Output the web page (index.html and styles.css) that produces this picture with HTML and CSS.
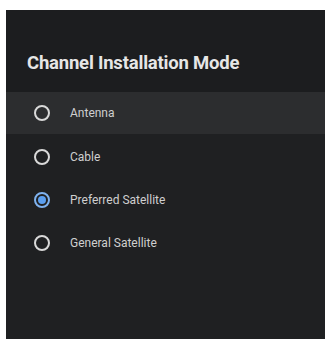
FILE: index.html
```html
<!DOCTYPE html>
<html>
<head>
<meta charset="utf-8">
<link rel="stylesheet" href="styles.css">
</head>
<body>
<div class="panel">
  <div class="header"><h1 class="title">Channel Installation Mode</h1></div>
  <ul class="list">
    <li class="item focused"><span class="radio"></span><span class="label">Antenna</span></li>
    <li class="item"><span class="radio"></span><span class="label">Cable</span></li>
    <li class="item"><span class="radio checked"></span><span class="label">Preferred Satellite</span></li>
    <li class="item"><span class="radio"></span><span class="label">General Satellite</span></li>
  </ul>
</div>
</body>
</html>
```
FILE: styles.css
```css
html, body { margin: 0; padding: 0; background: #ffffff; }
body { padding: 10px 4px 0 6px; height: 339px; box-sizing: border-box; overflow: hidden; font-family: Roboto, "Liberation Sans", sans-serif; }
.panel { background: #1f2022; height: 329px; width: 319px; }
.header { background: #1c1d1f; height: 82px; display: flex; align-items: flex-end; padding: 0 0 0 21px; box-sizing: border-box; }
.title { margin: 0 0 18px 0; font-size: 18.5px; font-weight: 700; color: #e6e6e6; letter-spacing: -0.2px; }
.list { list-style: none; margin: 0; padding: 0; }
.item { height: 43px; display: flex; align-items: center; padding-left: 28px; box-sizing: border-box; }
.item.focused { background: #2c2d2f; height: 42px; margin-bottom: 1px; }
.radio { width: 12px; height: 12px; border: 2px solid #d9d9d9; border-radius: 50%; box-sizing: content-box; flex: none; position: relative; }
.radio.checked { border-color: #7fb2ee; }
.radio.checked::after { content: ""; position: absolute; left: 2px; top: 2px; width: 8px; height: 8px; border-radius: 50%; background: #5b9ff0; }
.label { margin-left: 20px; font-size: 12px; color: #cfcfcf; }
```
